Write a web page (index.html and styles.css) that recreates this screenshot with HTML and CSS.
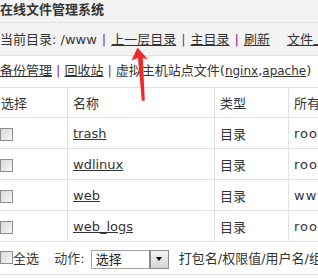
FILE: index.html
```html
<!DOCTYPE html>
<html lang="zh-CN">
<head>
    <meta charset="UTF-8">
    <title>在线文件管理系统</title>
    <link rel="stylesheet" href="styles.css">
</head>
<body>
<div class="page">
    <div class="title">在线文件管理系统</div>
    <div class="path">
        当前目录: /www<span class="sep">|</span><a href="#">上一层目录</a><span class="sep">|</span><a href="#">主目录</a><span class="sep">|</span><a href="#">刷新</a><a class="upload" href="#">文件上传</a>
    </div>
    <div class="tools">
        <a href="#">备份管理</a><span class="sep">|</span><a href="#">回收站</a><span class="sep">|</span>虚拟主机站点文件(<a class="conf" href="#">nginx</a>,<a class="conf" href="#">apache</a>)
    </div>
    <table class="files">
        <colgroup>
            <col class="c-check">
            <col class="c-name">
            <col class="c-type">
            <col class="c-owner">
        </colgroup>
        <tr class="head">
            <td>选择</td>
            <td>名称</td>
            <td>类型</td>
            <td>所有者</td>
        </tr>
        <tr>
            <td><input type="checkbox"></td>
            <td><a class="name" href="#">trash</a></td>
            <td>目录</td>
            <td class="owner">root</td>
        </tr>
        <tr>
            <td><input type="checkbox"></td>
            <td><a class="name" href="#">wdlinux</a></td>
            <td>目录</td>
            <td class="owner">root</td>
        </tr>
        <tr>
            <td><input type="checkbox"></td>
            <td><a class="name" href="#">web</a></td>
            <td>目录</td>
            <td class="owner">www</td>
        </tr>
        <tr>
            <td><input type="checkbox"></td>
            <td><a class="name" href="#">web_logs</a></td>
            <td>目录</td>
            <td class="owner">root</td>
        </tr>
        <tr>
            <td colspan="4" class="actions">
                <label class="all"><input type="checkbox">全选</label>
                <span class="act-label">动作:</span>
                <span class="select">
                    <select><option>选择</option></select>
                    <span class="select-btn"></span>
                </span>
                <span class="hint">打包名/权限值/用户名/组名</span>
            </td>
        </tr>
    </table>
</div>
<svg class="arrow" width="318" height="279" viewBox="0 0 318 279">
    <polygon points="137.5,47.5 131.5,60.5 138,58 141.8,101 144.8,100.5 142.8,58 148,59.5" fill="#ee2b2b"/>
</svg>
</body>
</html>
```

FILE: styles.css
```css
body {
    margin: 0;
    font-family: "DejaVu Sans", "Noto Sans CJK SC", sans-serif;
    font-size: 13px;
    color: #333;
    background-color: #fff;
    overflow: hidden;
    white-space: nowrap;
}

a {
    color: #333;
    text-decoration: underline;
}

.page {
    margin-left: -5px;
    width: 420px;
}

.title {
    height: 22px;
    line-height: 19px;
    padding-left: 5px;
    font-weight: bold;
    background-color: #f3f3f3;
    border-bottom: 1px solid #e2e2e2;
}

.path {
    height: 32px;
    line-height: 33px;
    padding-left: 5px;
    background-color: #f3f3f3;
    border-bottom: 1px solid #e2e2e2;
}

.tools {
    height: 31px;
    line-height: 29px;
    padding-left: 5px;
}

.sep {
    color: #7e3488;
    margin: 0 5px;
}

.tools .sep {
    margin: 0 4px;
}

.tools .conf {
    font-size: 12px;
}

.upload {
    margin-left: 17px;
}

.files {
    border-collapse: collapse;
    table-layout: fixed;
    width: 420px;
}

.c-check { width: 72px; }
.c-name { width: 147px; }
.c-type { width: 74px; }
.c-owner { width: 127px; }

.files td {
    border: 1px solid #e2e2e6;
    height: 30px;
    padding: 0 5px;
    vertical-align: middle;
}

.files .head td {
    height: 29px;
}

.owner {
    letter-spacing: 1px;
}

input[type="checkbox"] {
    appearance: none;
    -webkit-appearance: none;
    width: 13px;
    height: 13px;
    margin: 0 0 0 -1px;
    border: 1px solid #8e8e8e;
    background: linear-gradient(135deg, #d8d8d8, #f7f7f7);
    vertical-align: -3px;
    box-sizing: border-box;
}

.files .actions {
    height: 32px;
}

.all input {
    vertical-align: -1px;
}

.act-label {
    margin-left: 11px;
    color: #3c3c4c;
}

.select {
    display: inline-flex;
    align-items: stretch;
    height: 19px;
    width: 78px;
    border: 1px solid #a4a4a4;
    box-sizing: border-box;
    vertical-align: middle;
    margin-left: 2px;
}

.select select {
    appearance: none;
    -webkit-appearance: none;
    flex: 1;
    border: none;
    background: #fff;
    font-family: "DejaVu Sans", "Noto Sans CJK SC", sans-serif;
    font-size: 13px;
    color: #222;
    padding: 0 0 0 4px;
    margin: 0;
    min-width: 0;
}

.select-btn {
    width: 17px;
    border-left: 1px solid #8a8a8a;
    outline: 1px solid #8a8a8a;
    background: linear-gradient(#f4f4f4, #d4d4d4);
    display: flex;
    align-items: center;
    justify-content: center;
}

.select-btn::after {
    content: "";
    border-left: 3px solid transparent;
    border-right: 3px solid transparent;
    border-top: 4px solid #000;
}

.hint {
    margin-left: 6px;
}

.arrow {
    position: absolute;
    left: 0;
    top: 0;
    pointer-events: none;
}
```
